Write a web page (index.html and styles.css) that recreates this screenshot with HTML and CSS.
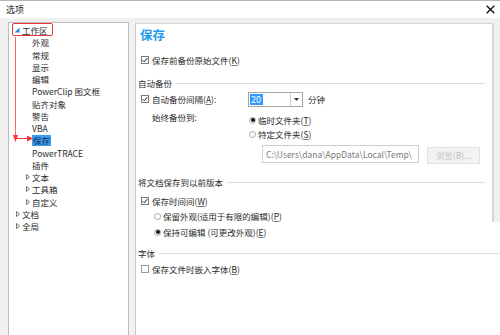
FILE: index.html
```html
<!DOCTYPE html>
<html lang="zh-CN">
<head>
<meta charset="utf-8">
<title>选项</title>
<link rel="stylesheet" href="styles.css">
</head>
<body>
<div class="titlebar">
  <span class="title">选项</span>
  <svg class="close" width="9" height="9" viewBox="0 0 9 9"><path d="M0.7 0.7L8.3 8.3M8.3 0.7L0.7 8.3" stroke="#111" stroke-width="1.4" fill="none"/></svg>
</div>
<div class="main">
  <div class="tree">
    <div class="row l0"><span class="tg"><svg width="9" height="12" viewBox="0 0 9 12"><polygon points="6.5,3.5 6.5,8.5 1.5,8.5" fill="#1e8ee6"/></svg></span><span class="lbl">工作区</span></div>
    <div class="row l1"><span class="tg"></span><span class="lbl">外观</span></div>
    <div class="row l1"><span class="tg"></span><span class="lbl">常规</span></div>
    <div class="row l1"><span class="tg"></span><span class="lbl">显示</span></div>
    <div class="row l1"><span class="tg"></span><span class="lbl">编辑</span></div>
    <div class="row l1"><span class="tg"></span><span class="lbl">PowerClip 图文框</span></div>
    <div class="row l1"><span class="tg"></span><span class="lbl">贴齐对象</span></div>
    <div class="row l1"><span class="tg"></span><span class="lbl">警告</span></div>
    <div class="row l1"><span class="tg"></span><span class="lbl">VBA</span></div>
    <div class="row l1"><span class="tg"></span><span class="lbl sel">保存</span></div>
    <div class="row l1"><span class="tg"></span><span class="lbl">PowerTRACE</span></div>
    <div class="row l1"><span class="tg"></span><span class="lbl">插件</span></div>
    <div class="row l1"><span class="tg"><svg width="9" height="12" viewBox="0 0 9 12"><polygon points="3.5,3.5 3.5,8.5 6.5,6" fill="none" stroke="#666" stroke-width="0.9"/></svg></span><span class="lbl">文本</span></div>
    <div class="row l1"><span class="tg"><svg width="9" height="12" viewBox="0 0 9 12"><polygon points="3.5,3.5 3.5,8.5 6.5,6" fill="none" stroke="#666" stroke-width="0.9"/></svg></span><span class="lbl">工具箱</span></div>
    <div class="row l1"><span class="tg"><svg width="9" height="12" viewBox="0 0 9 12"><polygon points="3.5,3.5 3.5,8.5 6.5,6" fill="none" stroke="#666" stroke-width="0.9"/></svg></span><span class="lbl">自定义</span></div>
    <div class="row l0"><span class="tg"><svg width="9" height="12" viewBox="0 0 9 12"><polygon points="3.5,3.5 3.5,8.5 6.5,6" fill="none" stroke="#666" stroke-width="0.9"/></svg></span><span class="lbl">文档</span></div>
    <div class="row l0"><span class="tg"><svg width="9" height="12" viewBox="0 0 9 12"><polygon points="3.5,3.5 3.5,8.5 6.5,6" fill="none" stroke="#666" stroke-width="0.9"/></svg></span><span class="lbl">全局</span></div>
    <svg class="annot" width="119" height="130" viewBox="0 0 119 130">
      <rect x="3.5" y="0.5" width="40" height="12" rx="1.5" fill="none" stroke="#ee3535" stroke-width="1"/>
      <line x1="6.5" y1="14" x2="6.5" y2="116" stroke="#f66" stroke-width="1"/>
      <polygon points="4,112 9,112 6.5,119" fill="#f33"/>
      <line x1="6.5" y1="115.5" x2="20" y2="115.5" stroke="#f33" stroke-width="1"/>
      <polygon points="18,112.5 24,115.5 18,118.5" fill="#f33"/>
    </svg>
  </div>
  <div class="pane">
    <div class="pane-body">
      <div class="ptitle">保存</div>
      <div class="cbrow r-cb1"><span class="cb on"><svg width="6" height="6" viewBox="0 0 6 6"><path d="M0.6 3.2L2.3 4.9L5.4 1" stroke="#222" stroke-width="1" fill="none"/></svg></span><span>保存前备份原始文件(<u>K</u>)</span></div>
      <div class="grp r-h1"><span>自动备份</span><i class="gline"></i></div>
      <div class="cbrow r-cb2">
        <div class="cb2lbl"><span class="cb on"><svg width="6" height="6" viewBox="0 0 6 6"><path d="M0.6 3.2L2.3 4.9L5.4 1" stroke="#222" stroke-width="1" fill="none"/></svg></span><span>自动备份间隔(<u>A</u>):</span></div>
        <div class="combo"><div class="cval"><span class="hl">20</span></div><div class="cbtn"><svg width="5" height="3" viewBox="0 0 5 3"><polygon points="0,0 5,0 2.5,3" fill="#333"/></svg></div></div>
        <span class="unit">分钟</span>
      </div>
      <div class="backup">
        <span class="blabel">始终备份到:</span>
        <div class="rgroup">
          <div class="rrow"><span class="rad on"></span><span>临时文件夹(<u>T</u>)</span></div>
          <div class="rrow"><span class="rad"></span><span>特定文件夹(<u>S</u>)</span></div>
        </div>
      </div>
      <div class="pathrow">
        <div class="pathbox">C:\Users\dana\AppData\Local\Temp\</div>
        <div class="browse">浏览(B)...</div>
      </div>
      <div class="grp r-h2"><span>将文档保存到以前版本</span><i class="gline"></i></div>
      <div class="cbrow r-cb3"><span class="cb on"><svg width="6" height="6" viewBox="0 0 6 6"><path d="M0.6 3.2L2.3 4.9L5.4 1" stroke="#222" stroke-width="1" fill="none"/></svg></span><span>保存时间间(<u>W</u>)</span></div>
      <div class="rrow sub r-r1"><span class="rad"></span><span>保留外观(适用于有限的编辑)(<u>P</u>)</span></div>
      <div class="rrow sub r-r2"><span class="rad on"></span><span>保持可编辑 (可更改外观)(<u>E</u>)</span></div>
      <div class="grp r-h3"><span>字体</span><i class="gline"></i></div>
      <div class="cbrow r-cb4"><span class="cb"></span><span>保存文件时嵌入字体(<u>B</u>)</span></div>
    </div>
    <div class="pane-rail"></div>
  </div>
</div>
</body>
</html>
```

FILE: styles.css
```css
html, body {
  margin: 0;
  padding: 0;
}
body {
  width: 500px;
  height: 335px;
  overflow: hidden;
  background: #f0f0f0;
  font-family: "Noto Sans CJK SC", "Noto Sans", sans-serif;
  font-size: 8.5px;
  color: #2a2a2a;
}
u {
  text-decoration: underline;
  text-decoration-color: #777;
  text-underline-offset: 1px;
}
.titlebar {
  height: 17px;
  border-top: 1px solid #b5b5b5;
  background: #fff;
  display: flex;
  align-items: center;
  justify-content: space-between;
  padding: 0 5px 0 6px;
}
.title {
  font-size: 9px;
  line-height: 17px;
  color: #222;
}
.close {
  display: block;
  margin-top: -1px;
}
.main {
  display: flex;
  height: 322px;
  padding: 4px 0 0 8px;
  box-sizing: border-box;
}
.tree {
  width: 121px;
  box-sizing: border-box;
  border: 1px solid #bdbdbd;
  background: #fff;
  position: relative;
  padding-top: 1px;
}
.row {
  display: flex;
  align-items: center;
  height: 12.25px;
  line-height: 12px;
  white-space: nowrap;
  color: #2a2a2a;
}
.row.l0 { padding-left: 4px; }
.row.l1 { padding-left: 14px; }
.tg {
  width: 9px;
  height: 12px;
  display: flex;
  flex: none;
}
.tg svg { display: block; }
.lbl.sel {
  background: #3c9cf0;
  color: #0d2a55;
  padding: 0 1px;
  line-height: 11px;
}
.annot {
  position: absolute;
  left: 0;
  top: 0;
  overflow: visible;
  pointer-events: none;
}
.pane {
  flex: 1;
  display: flex;
  margin-left: 6px;
  margin-top: 1px;
  background: #fff;
  border-left: 1px solid #c9c9c9;
}
.pane-body {
  flex: 1;
  border-top: 1px solid #d6d6d6;
  padding-left: 2px;
  display: flex;
  flex-direction: column;
  min-width: 0;
}
.pane-rail {
  width: 8px;
  height: 199px;
  flex: none;
  box-sizing: border-box;
  background: #f0f0f0;
  border-left: 2px solid #d7d7d7;
}
.ptitle {
  margin-top: 3px;
  height: 16px;
  line-height: 16px;
  padding-left: 2px;
  font-size: 12.5px;
  font-weight: bold;
  color: #1e9bef;
}
.cbrow {
  display: flex;
  align-items: center;
  height: 12px;
  line-height: 12px;
  padding-left: 3px;
  white-space: nowrap;
}
.cb {
  width: 8px;
  height: 8px;
  box-sizing: border-box;
  border: 1px solid #7a7a7a;
  background: #fff;
  margin-right: 3px;
  display: flex;
  align-items: center;
  justify-content: center;
  flex: none;
}
.cb svg { display: block; }
.r-cb1 { margin-top: 11px; }
.grp {
  display: flex;
  align-items: center;
  height: 12px;
  line-height: 12px;
  margin-right: 7px;
  white-space: nowrap;
}
.gline {
  flex: 1;
  height: 1px;
  background: #dedede;
  margin-left: 4px;
}
.r-h1 { margin-top: 11px; }
.r-cb2 {
  margin-top: 2px;
  height: 16px;
}
.cb2lbl {
  width: 107px;
  display: flex;
  align-items: center;
}
.combo {
  width: 55px;
  height: 15px;
  box-sizing: border-box;
  border: 1px solid #a5a5a5;
  display: flex;
  background: #fff;
}
.cval {
  flex: 1;
  display: flex;
  align-items: center;
  padding-left: 1px;
}
.hl {
  background: #3399ff;
  color: #fff;
  line-height: 11px;
  padding: 0 2px 0 1px;
  font-size: 9px;
}
.cbtn {
  width: 11px;
  border-left: 1px solid #d0d0d0;
  display: flex;
  align-items: center;
  justify-content: center;
}
.cbtn svg { display: block; }
.unit { margin-left: 5px; }
.backup {
  display: flex;
  margin-top: 4px;
  padding-left: 14px;
}
.blabel {
  width: 97px;
  line-height: 12px;
  height: 12px;
  flex: none;
}
.rgroup {
  margin-top: 2px;
  display: flex;
  flex-direction: column;
}
.rrow {
  display: flex;
  align-items: center;
  height: 14px;
  line-height: 12px;
  white-space: nowrap;
}
.rad {
  width: 7px;
  height: 7px;
  box-sizing: border-box;
  border: 1px solid #a8a8a8;
  border-radius: 50%;
  background: #fff;
  margin-right: 2px;
  display: flex;
  align-items: center;
  justify-content: center;
  flex: none;
}
.rad.on::after {
  content: "";
  width: 4px;
  height: 4px;
  border-radius: 50%;
  background: #111;
}
.pathrow {
  display: flex;
  align-items: flex-start;
  margin-top: 4px;
  padding-left: 124px;
}
.pathbox {
  width: 157px;
  height: 18px;
  box-sizing: border-box;
  border: 1px solid #cfcfcf;
  line-height: 16px;
  padding-left: 3px;
  color: #7a7a7a;
  white-space: nowrap;
  overflow: hidden;
}
.browse {
  width: 53px;
  height: 17px;
  margin-top: 2px;
  margin-left: 8px;
  box-sizing: border-box;
  border: 1px solid #e0e0e0;
  background: #f3f3f3;
  color: #bdbdbd;
  text-align: center;
  line-height: 15px;
}
.r-h2 { margin-top: 12px; }
.r-cb3 { margin-top: 7px; }
.rrow.sub {
  height: 12px;
  padding-left: 16px;
}
.r-r1 { margin-top: 3px; }
.r-r2 { margin-top: 4px; }
.r-h3 {
  margin-top: 9px;
  margin-right: -8px;
}
.r-cb4 { margin-top: 4px; }
.r-cb4 .cb { border-color: #9a9a9a; }
```
